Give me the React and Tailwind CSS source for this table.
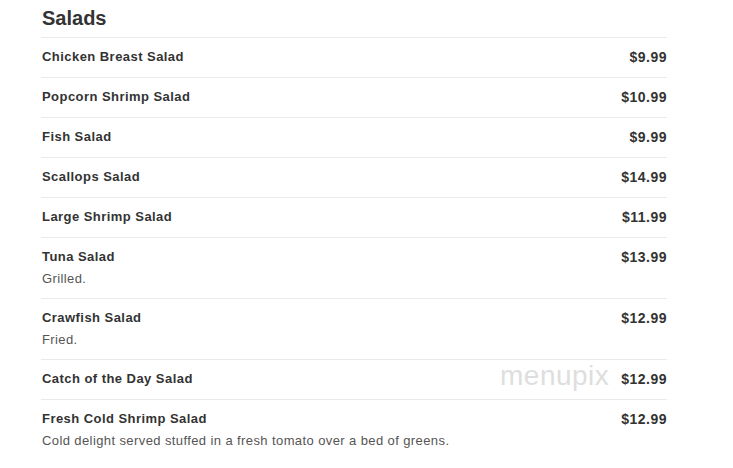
import React from "react";

const items = [
  { name: "Chicken Breast Salad", price: "$9.99" },
  { name: "Popcorn Shrimp Salad", price: "$10.99" },
  { name: "Fish Salad", price: "$9.99" },
  { name: "Scallops Salad", price: "$14.99" },
  { name: "Large Shrimp Salad", price: "$11.99" },
  { name: "Tuna Salad", price: "$13.99", desc: "Grilled." },
  { name: "Crawfish Salad", price: "$12.99", desc: "Fried." },
  { name: "Catch of the Day Salad", price: "$12.99", mark: true },
  {
    name: "Fresh Cold Shrimp Salad",
    price: "$12.99",
    desc: "Cold delight served stuffed in a fresh tomato over a bed of greens.",
  },
];

function App() {
  return (
    <div
      className="w-[733px] h-[468px] bg-white overflow-hidden pl-[41px]"
      style={{ fontFamily: '"Liberation Sans", Arial, sans-serif' }}
    >
      <div className="w-[626px]">
        <h2 className="text-[20px] font-bold text-[#333] leading-[24px] pt-[6px] pb-[7px] pl-px">
          Salads
        </h2>
        {items.map((it) => (
          <div
            key={it.name}
            className="relative border-t border-[#eaeaea] flex justify-between pl-px pt-[10px]"
          >
            <div className={it.desc ? "pb-[10px]" : "pb-[11px]"}>
              <div className="text-[13px] font-bold text-[#333] leading-[18px] tracking-[0.45px]">
                {it.name}
              </div>
              {it.desc && (
                <div className="text-[13px] text-[#555] leading-[18px] mt-[4px] tracking-[0.4px]">
                  {it.desc}
                </div>
              )}
            </div>
            <div className="text-[14px] font-bold text-[#333] leading-[18px] tracking-[0.5px]">
              {it.price}
            </div>
            {it.mark && (
              <div className="absolute left-[459px] top-[-1px] text-[28px] text-[#dedede] leading-[34px] tracking-[0.5px]">
                menupix
              </div>
            )}
          </div>
        ))}
      </div>
    </div>
  );
}

export default App;
